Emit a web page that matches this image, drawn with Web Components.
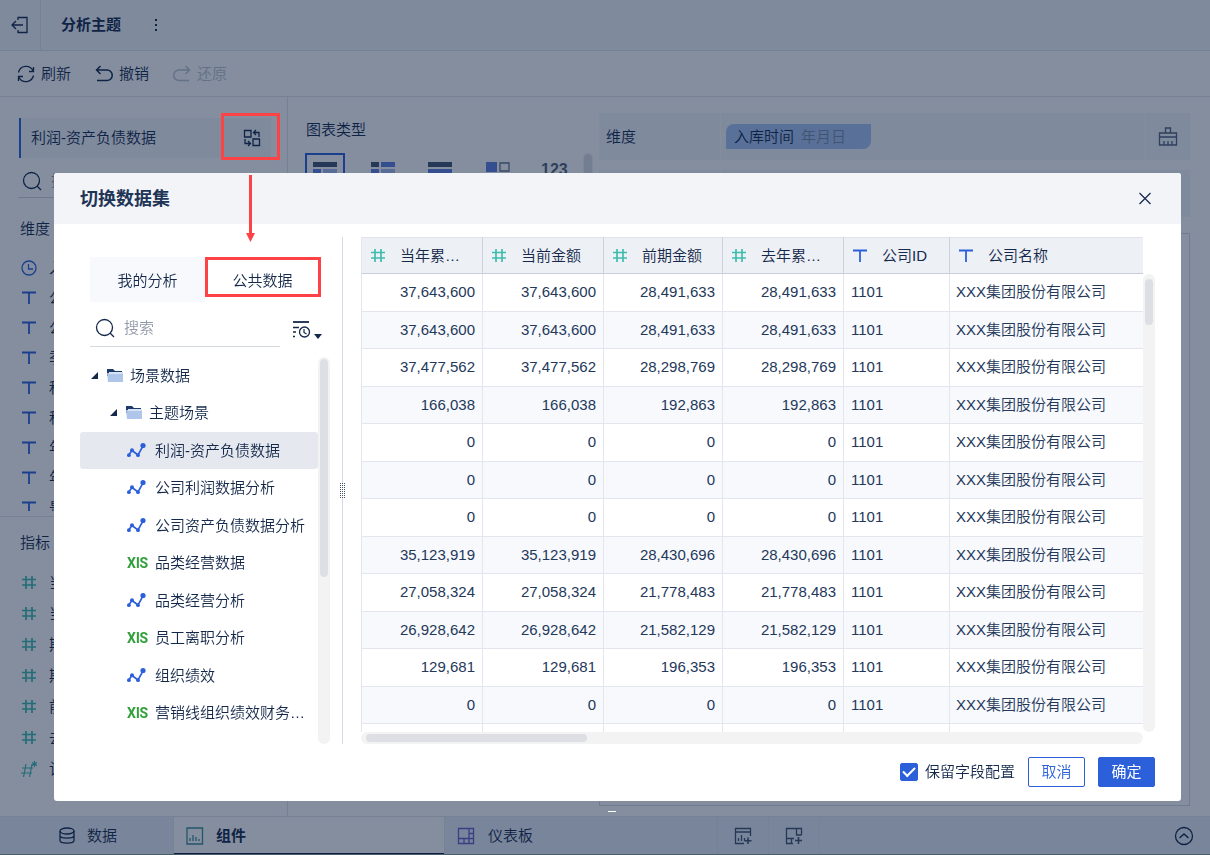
<!DOCTYPE html>
<html lang="zh-CN">
<head>
<meta charset="utf-8">
<title>分析主题</title>
<style>
  :root {
    --ink: #14284a;
    --muted: #929bab;
    --line: #e0e4ea;
    --blue: #2c60db;
    --teal: #3fbcae;
    --red: #fd4345;
  }
  html, body { height: 100%; margin: 0; overflow: hidden; }
  body {
    font-family: "Liberation Sans", "Noto Sans CJK SC", sans-serif;
    font-size: 15px;
    line-height: 24px;
    font-weight: 350;
    color: var(--ink);
    background: #fff;
  }
</style>
</head>
<body>
<analysis-app></analysis-app>

<script>
const ICONS = {
  exit: [18, '<path d="M7 4V1.500H16V16.500H7V14M1 9H12M5 5L1 9L5 13"/>'],
  more: [18, '<path d="M9 3v2M9 8v2M9 13v2" stroke-width="2"/>'],
  refresh: [18, '<path d="M1.500 7.500A7.800 7.800 0 0 1 16 5.500M16.500 2V6.500H12M16.500 10.500A7.800 7.800 0 0 1 2 12.500M1.500 16V11.500H6"/>'],
  undo: [18, '<path d="M5.500 1L1.500 5L5.500 9M2 5H12A5 5 0 0 1 12 15.500H2" stroke-width="1.500"/>'],
  redo: [18, '<path d="M12.500 1L16.500 5L12.500 9M16 5H6A5 5 0 0 0 6 15.500H16" stroke-width="1.500"/>'],
  swap: [18, '<path d="M1.500 1.500H8V8H1.500zM10 10H16.500V16.500H10zM11 3.500H16V8M13 1L10.500 3.500L13 6M2 10V14.500H7M5 12L7.500 14.500L5 17"/>'],
  search: [20, '<circle cx="9.500" cy="9.500" r="8"/><path d="M15 15L19 19"/>'],
  clock: [16, '<circle cx="8" cy="8" r="7"/><path d="M7.500 4V9H12"/>'],
  text: [16, '<path d="M1 2.500H15M8 2.500V14" stroke-width="1.800"/>'],
  hash: [16, '<path d="M5 1V14M11 1V14M1 4.500H15M1 10H15" stroke-width="1.700"/>'],
  count: [16, '<path d="M5 3L2.500 16M11 3L8.500 16M1 7H12M0 12H11M13.500 0V6M11 1.500L16 4.500M16 1.500L11 4.500" stroke-width="1.200"/>'],
  broom: [20, '<path d="M7.500 6V1H12.500V6M1.500 11V6H18.500V11M1.500 10H18.500V18H1.500zM6 14V18M10 14V18M14 14V18"/>'],
  close: [14, '<path d="M1.500 1L12.500 12M12.500 1L1.500 12" stroke-width="1.200"/>'],
  database: [18, '<ellipse cx="9" cy="4" rx="7" ry="3"/><path d="M2 4V13.500C2 17 16 17 16 13.500V4M2 8.500C2 12 16 12 16 8.500"/>'],
  chart: [18, '<path d="M1 1H16.500V17H1zM4 14V11M7 14V8M10 14V10M13 14V12"/>'],
  board: [18, '<path d="M1.500 1.500H16.500V16.500H1.500zM1.500 11.500H16.500M12 1.500V16.500M7 11.500V16.500M12 6.500H16.500"/>'],
  addchart: [18, '<path d="M16.500 9V1.500H1.500V16.500H10M1.500 5H16.500M4.500 14V11M7.500 14V8M10.500 14V11"/><path d="M14 10.500V17M10.500 13.800H17.500" stroke-width="1.600"/>'],
  addboard: [18, '<path d="M16.500 8V1.500H1.500V16.500H8M1.500 11.500H9M11.500 1.500V8H16.500M6.500 11.500V16.500"/><path d="M13.500 10V17M10 13.500H17" stroke-width="1.600"/>'],
  up: [20, '<circle cx="10" cy="10" r="8.500"/><path d="M5.500 12L10 8L14.500 12" stroke-width="1.500"/>'],
  sort: [20, '<path d="M2 3H18" stroke-width="1.800"/><path d="M2 8.500H8M2 13H5M2 17.500H4" stroke-width="1.500"/><circle cx="13.500" cy="13" r="5"/><path d="M13 10V13.500L15.500 15" stroke-width="1.200"/>'],
  trend: [20, '<path d="M1.700 14L5 9.500L11 14L16 5" stroke-width="1.600"/><g fill="currentColor" stroke="none"><circle cx="1.900" cy="14.200" r="1.900"/><circle cx="5" cy="9.200" r="2"/><circle cx="11" cy="14.200" r="1.900"/><circle cx="16" cy="4.500" r="2.600"/></g>'],
  folder: [16, '<g stroke="none"><path d="M0 1H6L8 3H15V8H0z" fill="#1c3b6b"/><path d="M0 5H16V14H1z" fill="#b0c5ea"/><path d="M2 4H16V6H2z" fill="#d7e2f6"/></g>'],
  table1: [24, '<g stroke="none"><path d="M0 0H24V5H0z" fill="#42526e"/><path d="M0 7H8V24H0z" fill="#5f7fe0"/><path d="M10 7H24V24H10z" fill="#a9b9ee"/></g>'],
  table2: [24, '<g stroke="none"><path d="M0 0H8V5H0z" fill="#42526e"/><path d="M10 0H24V5H10zM0 7H8V24H0z" fill="#5f7fe0"/><path d="M10 7H24V24H10z" fill="#a9b9ee"/></g>'],
  table3: [24, '<g stroke="none"><path d="M0 0H24V5H0z" fill="#42526e"/><path d="M0 7H24V11H0z" fill="#5f7fe0"/></g>'],
  table4: [24, '<path d="M0 0H11V10H0z" fill="#5f7fe0" stroke="none"/><path d="M14 1H23V9H14z" stroke="#68758b"/>']
};

function define(name, styles, markup) {
  customElements.define(name, class extends HTMLElement {
    constructor() {
      super();
      this.attachShadow({ mode: 'open' });
    }

    connectedCallback() {
      const html = typeof markup === 'function' ? markup(this) : markup;
      this.shadowRoot.innerHTML = `
        <style>
          *, :host { box-sizing: border-box; }
          button { font: inherit; color: inherit; background: none; border: 0; padding: 0; margin: 0; cursor: pointer; }
          ${styles}
        </style>
        ${html}`;
    }
  });
}

const attr = (el, name) => el.getAttribute(name) || '';

define('ui-icon', `
  :host { display: inline-flex; flex: none; }
  svg { display: block; fill: none; stroke: currentColor; stroke-width: 1.3; }
`, (el) => {
  const [size, body] = ICONS[attr(el, 'name')];
  return `<svg width="${size}" height="${size}" viewBox="0 0 ${size} ${size}" aria-hidden="true">${body}</svg>`;
});

// Track with a thumb; length comes from the flex or grid cell it sits in
define('scroll-bar', `
  :host { display: block; flex: none; width: 12px; background: #f3f3f4; border-radius: 6px; padding: 5px 2px; }
  :host([horizontal]) { width: auto; height: 12px; padding: 2px 5px; }
  :host([plain]) { width: 10px; padding: 1px; }
  :host([tight]) { padding-top: 2px; }
  div { background: #dddfe4; border-radius: 4px; height: var(--thumb); }
  :host([horizontal]) div { height: 8px; width: var(--thumb); }
`, '<div></div>');

define('top-bar', `
  :host { display: flex; align-items: center; height: 51px; border-bottom: 1px solid var(--line); background: #f5f7fb; }
  .back { width: 41px; align-self: stretch; border-right: 1px solid var(--line); display: grid; place-items: center; }
  h1 { margin: 0 26px 0 20px; font-size: 15px; font-weight: 700; }
  button { display: flex; }
`, `
  <button class="back" aria-label="退出"><ui-icon name="exit"></ui-icon></button>
  <h1>分析主题</h1>
  <button aria-label="更多"><ui-icon name="more"></ui-icon></button>
`);

define('tool-bar', `
  :host { display: flex; align-items: center; gap: 24px; height: 46px; padding: 0 17px; border-bottom: 1px solid var(--line); }
  button { display: flex; align-items: center; gap: 6px; }
  button:disabled { color: #bcc3cd; }
`, `
  <button><ui-icon name="refresh"></ui-icon>刷新</button>
  <button><ui-icon name="undo"></ui-icon>撤销</button>
  <button disabled><ui-icon name="redo"></ui-icon>还原</button>
`);

define('field-item', `
  :host { display: flex; align-items: center; gap: 12px; height: 30px; padding-left: 21px; white-space: nowrap; }
  :host([metric]) { height: 31px; }
  ui-icon { color: var(--blue); }
  :host([metric]) ui-icon { color: var(--teal); }
`, (el) => `<ui-icon name="${attr(el, 'icon')}"></ui-icon><slot></slot>`);

const DIMENSIONS = ['公司ID', '公司名称', '季度', '科目名称', '科目编码', '年份', '年月', '是否有效'];
const METRICS = ['当年累计', '当前金额', '期初金额', '期末金额', '前期金额', '去年累计'];

define('field-panel', `
  :host { display: flex; flex-direction: column; width: 288px; flex: none; padding-top: 21px; border-right: 1px solid var(--line); overflow: hidden; }
  .dataset { display: flex; align-items: center; justify-content: space-between; flex: none; height: 40px; margin: 0 16px 0 19px; padding: 0 10px; border-left: 2px solid var(--blue); background: #f4f7fb; }
  .dataset button { display: flex; }
  label { display: flex; align-items: center; gap: 9px; flex: none; height: 40px; margin: 0 16px 0 18px; padding: 6px 4px 0; border-bottom: 1px solid #cfd4dc; }
  input { font: inherit; border: 0; outline: 0; padding: 0; min-width: 0; background: none; }
  input::placeholder { color: var(--muted); opacity: 1; }
  h2 { font-size: 15px; font-weight: inherit; margin: 19px 20px 12px; }
  .dims { height: 258px; overflow: hidden; }
  .metrics { border-top: 1px solid var(--line); margin-top: 5px; }
  .metrics h2 { margin-top: 14px; }
`, `
  <div class="dataset">利润-资产负债数据<button aria-label="切换数据集"><ui-icon name="swap"></ui-icon></button></div>
  <label><ui-icon name="search"></ui-icon><input type="text" aria-label="搜索字段" placeholder="搜索"></label>
  <h2>维度</h2>
  <div class="dims">
    <field-item icon="clock">入库时间</field-item>
    ${DIMENSIONS.map((d) => `<field-item icon="text">${d}</field-item>`).join('')}
  </div>
  <div class="metrics">
    <h2>指标</h2>
    ${METRICS.map((m) => `<field-item metric icon="hash">${m}</field-item>`).join('')}
    <field-item metric icon="count">记录数</field-item>
  </div>
`);

define('chart-picker', `
  :host { display: block; width: 311px; flex: none; padding: 21px 6px 11px 17px; }
  h2 { font-size: 15px; font-weight: inherit; margin: 0 0 11px 1px; }
  .row { display: flex; gap: 8px; height: 40px; }
  .types { flex: 1; display: flex; justify-content: space-between; }
  button { width: 40px; height: 40px; padding: 9px 8px; display: flex; overflow: hidden; }
  button.on { border: 2px solid var(--blue); padding: 7px 6px; }
  .num { font-size: 16px; line-height: 16px; font-weight: 700; color: #52607a; padding: 9px 6px; }
  scroll-bar { --thumb: 100%; }
`, `
  <h2>图表类型</h2>
  <div class="row">
    <div class="types">
      <button class="on" aria-label="分组表"><ui-icon name="table1"></ui-icon></button>
      <button aria-label="交叉表"><ui-icon name="table2"></ui-icon></button>
      <button aria-label="明细表"><ui-icon name="table3"></ui-icon></button>
      <button aria-label="颜色表格"><ui-icon name="table4"></ui-icon></button>
      <button class="num">123</button>
    </div>
    <scroll-bar plain></scroll-bar>
  </div>
`);

define('drop-shelf', `
  :host { display: grid; grid-template-columns: 121px 1fr 45px; height: 47px; background: #f4f7fb; }
  div { display: flex; align-items: center; padding-left: 7px; }
  div + div { border-left: 1px solid #fff; padding-left: 5px; }
  div.clear { justify-content: center; color: #53617b; padding: 0; }
`, (el) => `
  <div>${attr(el, 'label')}</div>
  <div><slot></slot></div>
  <div class="clear">${el.hasAttribute('clearable') ? '<ui-icon name="broom"></ui-icon>' : ''}</div>
`);

define('field-pill', `
  :host { display: flex; align-items: center; gap: 7px; width: 145px; height: 25px; padding-left: 8px; border-radius: 8px 0 8px 0; background: #a9c3f0; }
  span { color: #7a8aa8; }
`, (el) => `<slot></slot><span>${attr(el, 'unit')}</span>`);

define('design-area', `
  :host { flex: 1; min-width: 0; display: flex; }
  .stage { flex: 1; display: flex; flex-direction: column; gap: 10px; padding: 16px 20px 10px 0; }
  .canvas { flex: 1; border: 1px solid #d5dae2; margin-top: 6px; }
`, `
  <chart-picker></chart-picker>
  <div class="stage">
    <drop-shelf label="维度" clearable><field-pill unit="年月日">入库时间</field-pill></drop-shelf>
    <drop-shelf></drop-shelf>
    <div class="canvas"></div>
  </div>
`);

define('bottom-bar', `
  :host { display: flex; flex: none; height: 39px; background: #e9edf5; border-top: 1px solid var(--line); border-bottom: 1px solid #8ba08f; }
  button { display: flex; align-items: center; gap: 12px; border-right: 1px solid var(--line); }
  .data { width: 174px; padding-left: 58px; gap: 11px; }
  .on { width: 271px; padding-left: 12px; background: #fff; font-weight: 700; box-shadow: inset 0 -1px #091e40; }
  .board { width: 273px; padding-left: 12px; gap: 13px; }
  .add { width: 51px; justify-content: center; color: #44536e; }
  .up { margin-left: auto; border: 0; padding: 0 16px; }
  .on ui-icon { color: #3c8d95; }
  .board ui-icon { color: #6a5fc8; }
`, `
  <button class="data"><ui-icon name="database"></ui-icon>数据</button>
  <button class="on"><ui-icon name="chart"></ui-icon>组件</button>
  <button class="board"><ui-icon name="board"></ui-icon>仪表板</button>
  <button class="add" aria-label="添加组件"><ui-icon name="addchart"></ui-icon></button>
  <button class="add" aria-label="添加仪表板"><ui-icon name="addboard"></ui-icon></button>
  <button class="up" aria-label="展开"><ui-icon name="up"></ui-icon></button>
`);

define('tree-item', `
  :host { display: block; height: 37px; }
  :host(:nth-child(even)) { height: 38px; }
  button { display: flex; align-items: center; width: 100%; height: 37px; padding-left: 47px; border-radius: 3px; white-space: nowrap; }
  :host([selected]) button { background: #e5e8ef; }
  :host([level="0"]) button { padding-left: 10px; }
  :host([level="1"]) button { padding-left: 29px; }
  i { width: 0; height: 0; border-left: 7px solid transparent; border-bottom: 7px solid var(--ink); margin: 0 9px 0 1px; }
  ui-icon { color: var(--blue); margin-right: 8px; }
  ui-icon[name="folder"] { margin-right: 7px; }
  b { width: 20px; margin-right: 8px; font: 700 14px/20px "Liberation Sans Narrow", Roboto, sans-serif; color: #30a03a; }
`, (el) => {
  const type = attr(el, 'type');
  const icon = type === 'xls' ? '<b>XlS</b>' : `<ui-icon name="${type}"></ui-icon>`;
  return `<button>${type === 'folder' ? '<i></i>' : ''}${icon}<slot></slot></button>`;
});

define('dataset-picker', `
  :host { display: flex; flex-direction: column; width: 263px; padding-top: 20px; border-right: 1px solid #d5d9e2; position: relative; min-height: 0; }
  .tabs { display: flex; margin: 0 22px 0 10px; flex: none; }
  .tabs button { flex: 1; height: 45px; padding-top: 3px; background: #f7f9fd; }
  .tabs .on { background: none; }
  .find { display: flex; align-items: center; gap: 11px; flex: none; height: 45px; padding: 0 20px 0 10px; margin-bottom: 10px; }
  label { flex: 1; min-width: 0; display: flex; align-items: center; gap: 9px; height: 45px; padding: 8px 4px 0 5px; border-bottom: 1px solid #d5d9e2; }
  input { flex: 1; width: 0; min-width: 0; font: inherit; line-height: 24px; color: inherit; border: 0; outline: 0; padding: 0; background: none; }
  input::placeholder { color: var(--muted); opacity: 1; }
  .sort { display: flex; flex: none; align-items: flex-end; gap: 3px; padding-top: 8px; }
  .sort i { border: 4px solid transparent; border-top: 5px solid var(--ink); border-bottom: 0; }
  .list { flex: 1; min-height: 0; display: flex; margin-right: 12px; }
  .tree { flex: 1; min-width: 0; overflow: hidden; }
  scroll-bar { --thumb: 218px; }
  .grip { position: absolute; right: -4px; top: 246px; display: block; fill: #44536e; background: #fff; }
`, `
  <div class="tabs"><button>我的分析</button><button class="on">公共数据</button></div>
  <div class="find">
    <label><ui-icon name="search"></ui-icon><input type="text" aria-label="搜索" placeholder="搜索"></label>
    <button class="sort" aria-label="排序"><ui-icon name="sort"></ui-icon><i></i></button>
  </div>
  <div class="list">
    <div class="tree">
      <tree-item level="0" type="folder">场景数据</tree-item>
      <tree-item level="1" type="folder">主题场景</tree-item>
      <tree-item type="trend" selected>利润-资产负债数据</tree-item>
      <tree-item type="trend">公司利润数据分析</tree-item>
      <tree-item type="trend">公司资产负债数据分析</tree-item>
      <tree-item type="xls">品类经营数据</tree-item>
      <tree-item type="trend">品类经营分析</tree-item>
      <tree-item type="xls">员工离职分析</tree-item>
      <tree-item type="trend">组织绩效</tree-item>
      <tree-item type="xls">营销线组织绩效财务…</tree-item>
    </div>
    <scroll-bar tight></scroll-bar>
  </div>
  <svg class="grip" width="7" height="15" viewBox="0 0 7 15" aria-hidden="true">
    ${[0, 2, 4, 6, 8, 10, 12, 14].map((y) => `<path d="M1 ${y}h1v1h-1zM3 ${y}h1v1h-1zM5 ${y}h1v1h-1z"/>`).join('')}
  </svg>
`);

const COLUMNS = [
  ['hash', '当年累…', 122], ['hash', '当前金额', 121], ['hash', '前期金额', 119],
  ['hash', '去年累…', 121], ['text', '公司ID', 106], ['text', '公司名称', 0]
];

// [this year / current, previous / last year]
const ROWS = [
  ['37,643,600', '28,491,633'], ['37,643,600', '28,491,633'], ['37,477,562', '28,298,769'],
  ['166,038', '192,863'], ['0', '0'], ['0', '0'], ['0', '0'],
  ['35,123,919', '28,430,696'], ['27,058,324', '21,778,483'], ['26,928,642', '21,582,129'],
  ['129,681', '196,353'], ['0', '0'], ['', '']
];

define('data-grid', `
  :host { display: grid; grid-template: minmax(0, 1fr) 12px / minmax(0, 1fr) 12px; min-width: 0; min-height: 0; }
  .view { overflow: hidden; }
  table { width: 100%; table-layout: fixed; border-collapse: separate; border-spacing: 0; }
  th, td { padding: 0 7px; border-right: 1px solid #e3e6ee; border-bottom: 1px solid #e3e6ee; text-align: left; white-space: nowrap; overflow: hidden; }
  th { height: 37px; padding: 0 0 0 8px; font-weight: inherit; background: #edf0f5; border-top: 1px solid #e0e3ea; border-right-color: #cbd1db; border-bottom-color: #c8ced8; }
  th:first-child, td:first-child { border-left: 1px solid #e3e6ee; }
  th:last-child, td:last-child { border-right: 0; }
  td { height: 38px; padding-bottom: 2px; color: #24385a; }
  tr:nth-child(even) td { height: 37px; padding-bottom: 0; background: #f7f9fd; }
  td.n { text-align: right; }
  td:last-child { padding-left: 6px; }
  th div { display: flex; align-items: center; gap: 14px; }
  ui-icon { color: var(--teal); }
  ui-icon[name="text"] { color: var(--blue); }
  .v { margin-top: 37px; --thumb: 46px; }
  .h { --thumb: 221px; }
`, `
  <div class="view">
    <table>
      <colgroup>${COLUMNS.map((c) => (c[2] ? `<col style="width:${c[2]}px">` : '<col>')).join('')}</colgroup>
      <thead><tr>${COLUMNS.map(([icon, name]) => `<th><div><ui-icon name="${icon}"></ui-icon>${name}</div></th>`).join('')}</tr></thead>
      <tbody>${ROWS.map(([a, b]) => `<tr>
        <td class="n">${a}</td><td class="n">${a}</td><td class="n">${b}</td><td class="n">${b}</td>
        <td>${a && '1101'}</td><td>${a && 'XXX集团股份有限公司'}</td></tr>`).join('')}</tbody>
    </table>
  </div>
  <scroll-bar class="v"></scroll-bar>
  <scroll-bar class="h" horizontal></scroll-bar>
`);

define('modal-dialog', `
  :host { position: fixed; inset: 0; background: rgba(10, 30, 64, .5); }
  section { position: absolute; inset: 173px 29px 54px 54px; display: flex; flex-direction: column; background: #fff; border-radius: 3px; overflow: hidden; }
  header { display: flex; align-items: center; justify-content: space-between; flex: none; height: 51px; padding: 0 29px 0 26px; background: #f2f4f8; }
  h2 { margin: 0; font-size: 18px; font-weight: 700; color: #1f3556; }
  header button { display: flex; }
  .body { flex: 1; min-height: 0; display: grid; grid-template: minmax(0, 1fr) / 263px minmax(0, 1fr); gap: 18px; padding: 13px 26px 0; }
  footer { display: flex; align-items: center; justify-content: flex-end; gap: 13px; flex: none; height: 57px; padding: 0 26px 2px; }
  .handle { position: absolute; left: 608px; bottom: 43px; width: 8px; height: 1px; background: #fff; }
`, (el) => `
  <section role="dialog" aria-label="${attr(el, 'heading')}">
    <header><h2>${attr(el, 'heading')}</h2><button aria-label="关闭"><ui-icon name="close"></ui-icon></button></header>
    <div class="body"><slot></slot></div>
    <footer><slot name="footer"></slot></footer>
  </section>
  <div class="handle"></div>
`);

define('check-option', `
  :host { display: block; }
  label { display: flex; align-items: center; gap: 7px; }
  input { appearance: none; width: 18px; height: 18px; margin: 0; border-radius: 2px; display: grid; place-items: center; border: 1px solid var(--blue); }
  input:checked { background: var(--blue); }
  input:checked::before { content: ""; width: 10px; height: 5px; border: solid #fff; border-width: 0 0 2px 2px; rotate: -45deg; translate: 0 -1px; }
`, '<label><input type="checkbox" checked><slot></slot></label>');

define('action-button', `
  :host { display: block; }
  button { display: block; width: 57px; height: 30px; border: 1px solid var(--blue); border-radius: 2px; color: var(--blue); }
  :host([primary]) button { background: var(--blue); color: #fff; font-weight: 400; }
`, '<button><slot></slot></button>');

// Red guide marks: swap button -> arrow -> public data tab
define('guide-marks', `
  :host { position: fixed; inset: 0; pointer-events: none; }
  svg { display: block; }
  rect { fill: none; stroke: var(--red); stroke-width: 3; }
`, `
  <svg width="340" height="320" viewBox="0 0 340 320" aria-hidden="true">
    <rect x="222.500" y="114.500" width="56" height="44"/>
    <rect x="206.500" y="258.500" width="113" height="37"/>
    <path d="M249 175h3v58h3l-4.500 9l-4.500 -9h3z" fill="#fd4345"/>
  </svg>
`);

define('analysis-app', `
  :host { display: flex; flex-direction: column; height: 100vh; }
  main { flex: 1; min-height: 0; display: flex; }
`, `
  <top-bar></top-bar>
  <tool-bar></tool-bar>
  <main><field-panel></field-panel><design-area></design-area></main>
  <bottom-bar></bottom-bar>
  <modal-dialog heading="切换数据集">
    <dataset-picker></dataset-picker>
    <data-grid></data-grid>
    <check-option slot="footer">保留字段配置</check-option>
    <action-button slot="footer">取消</action-button>
    <action-button slot="footer" primary>确定</action-button>
  </modal-dialog>
  <guide-marks></guide-marks>
`);
</script>
</body>
</html>
